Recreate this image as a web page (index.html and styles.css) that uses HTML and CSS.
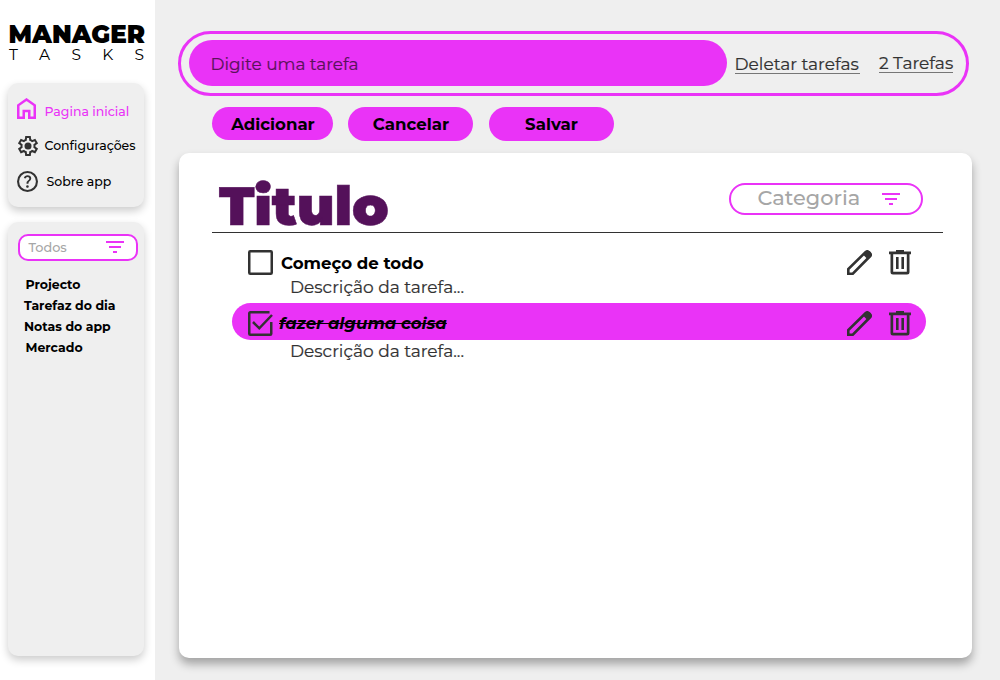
FILE: index.html
```
<!DOCTYPE html>
<html lang="pt-BR">
<head>
<meta charset="utf-8">
<title>Manager Tasks</title>
<link rel="stylesheet" href="styles.css">
</head>
<body>
<svg class="defs" aria-hidden="true">
  <symbol id="filter" viewBox="0 0 18 12"><path d="M0 0h18v2H0zM3 5h12v2H3zM7 10h4v2H7z"/></symbol>
  <symbol id="edit" viewBox="0 0 25 25"><path d="M1.300 23.700V19L18.500 2.200a2.500 2.500 0 0 1 3.500 0l.8.800a2.500 2.500 0 0 1 0 3.500L5.800 23.700z" fill="none" stroke="#323232" stroke-width="2.600"/><path d="m16 4.500 3-3a3 3 0 0 1 3.800 0L24 3a3 3 0 0 1 0 3.500l-3.200 3z"/></symbol>
  <symbol id="trash" viewBox="0 0 22 25"><path d="M0 1.500h7V0h8v1.500h7v2.700h-1.500V22a2.500 2.500 0 0 1-2.500 2.500H4A2.500 2.500 0 0 1 1.500 22V4.200H0zm4.200 2.700v17.600h13.600V4.200zM7 7h2.600v12H7zm5.400 0H15v12h-2.600z" fill-rule="evenodd"/></symbol>
</svg>
<aside class="sidebar">
  <div class="logo">
    <div class="logo-name">MANAGER</div>
    <div class="logo-sub"><span>T</span><span>A</span><span>S</span><span>K</span><span>S</span></div>
  </div>
  <nav class="panel menu">
    <a class="menu-item active"><svg class="home" viewBox="0 0 19 21"><path d="M1.250 19.750V7.300L9.500 1.500l8.250 5.800v12.450h-5.500V13h-5.500v6.750z"/></svg>Pagina inicial</a>
    <a class="menu-item settings"><svg class="gear" viewBox="2 2 20 20"><path d="m9.250 22-.4-3.200q-.325-.125-.612-.3t-.563-.375L4.700 19.375l-2.750-4.750 2.575-1.950Q4.500 12.500 4.500 12.338v-.675q0-.163.025-.338L1.950 9.375l2.750-4.750 2.975 1.250q.275-.2.575-.375t.6-.3l.4-3.200h5.500l.4 3.200q.325.125.613.3t.562.375l2.975-1.250 2.750 4.750-2.575 1.950q.025.175.025.338v.675q0 .162-.05.337l2.575 1.950-2.750 4.750-2.950-1.250q-.275.2-.575.375t-.6.3l-.4 3.200zM11 20h1.975l.35-2.650q.775-.2 1.438-.587t1.212-.938l2.475 1.025.975-1.700-2.150-1.625q.125-.35.175-.737T17.500 12t-.05-.787-.175-.738l2.150-1.625-.975-1.700-2.475 1.050q-.55-.575-1.212-.963t-1.438-.587L13 4h-1.975l-.35 2.650q-.775.2-1.437.588t-1.213.937L5.550 7.150l-.975 1.700 2.150 1.600q-.125.375-.175.750t-.05.8q0 .4.050.775t.175.750l-2.150 1.625.975 1.700 2.475-1.050q.55.575 1.213.963t1.437.587z"/><circle cx="12" cy="12" r="3.500"/></svg>Configurações</a>
    <a class="menu-item"><svg class="help" viewBox="2 2 20 20"><path d="M11.950 18q.525 0 .888-.363t.362-.887-.362-.888-.888-.362-.887.362-.363.888.363.887.887.363m-.9-3.850h1.850q0-.825.188-1.300t1.062-1.300q.65-.65 1.025-1.238T15.550 8.900q0-1.400-1.025-2.150T12.100 6q-1.425 0-2.312.750T8.550 8.550l1.650.65q.125-.45.563-.975T12.100 7.700q.8 0 1.200.438t.4.962q0 .5-.3.938t-.75.812q-1.100.975-1.350 1.475t-.25 1.825M12 22a10 10 0 1 1 0-20 10 10 0 0 1 0 20m0-2a8 8 0 1 0 0-16 8 8 0 0 0 0 16"/></svg>Sobre app</a>
  </nav>
  <section class="panel lists">
    <div class="select"><span>Todos</span><svg class="filter"><use href="#filter"/></svg></div>
    <ul class="categories">
      <li class="inset">Projecto</li>
      <li>Tarefaz do dia</li>
      <li>Notas do app</li>
      <li class="inset">Mercado</li>
    </ul>
  </section>
</aside>
<main class="main">
  <header class="topbar">
    <div class="input">Digite uma tarefa</div>
    <a class="link delete">Deletar tarefas</a>
    <a class="link count">2 Tarefas</a>
  </header>
  <div class="actions">
    <button class="btn add">Adicionar</button>
    <button class="btn cancel">Cancelar</button>
    <button class="btn save">Salvar</button>
  </div>
  <section class="board">
    <div class="board-head">
      <h1 class="title">Titulo</h1>
      <div class="category"><span class="category-label">Categoria</span><svg class="filter"><use href="#filter"/></svg></div>
    </div>
    <article class="entry">
      <div class="task">
        <svg class="check" viewBox="0 0 25 25"><rect x="1.250" y="1.250" width="22.500" height="22.500" rx="1"/></svg>
        <span class="name">Começo de todo</span>
        <svg class="edit"><use href="#edit"/></svg><svg class="trash"><use href="#trash"/></svg>
      </div>
      <p class="desc">Descrição da tarefa...</p>
    </article>
    <article class="entry">
      <div class="task done">
        <svg class="check" viewBox="0 0 25 25"><path d="M21.500 1.250H2.250a1 1 0 0 0-1 1v20.500a1 1 0 0 0 1 1h20a1 1 0 0 0 1-1V11M5 11l6.300 6.300L24 4"/></svg>
        <span class="name"><s>fazer alguma coisa</s></span>
        <svg class="edit"><use href="#edit"/></svg><svg class="trash"><use href="#trash"/></svg>
      </div>
      <p class="desc">Descrição da tarefa...</p>
    </article>
  </section>
</main>
</body>
</html>
```
FILE: styles.css
```
* { box-sizing: border-box; }
body { margin: 0; width: 1000px; height: 680px; overflow: hidden; display: flex; background: #efefef; color: #000; font-family: Montserrat, Inter, sans-serif; white-space: nowrap; }
.defs { position: absolute; width: 0; height: 0; }
svg { flex: none; fill: #323232; }

.sidebar { width: 155px; background: #fff; padding: 22px 11px 24px 8px; display: flex; flex-direction: column; }
.logo { height: 61px; }
.logo-name { height: 24px; padding-left: .6px; font-size: 24.6px; line-height: 24px; font-weight: 900; }
.logo-sub { display: flex; justify-content: space-between; padding-left: 1px; line-height: 17px; font-size: 15.5px; font-weight: 400; }
.panel { background: #efefef; border-radius: 10px; box-shadow: 0 4px 8px rgba(0, 0, 0, .2); }
.menu { height: 124px; padding: 11px 0 0 9px; }
.menu-item { display: flex; align-items: center; height: 35px; font-size: 12.5px; font-weight: 500; }
.settings { height: 33px; margin-bottom: 2px; }
.active { color: #ea33f7; }
.home { width: 19px; height: 21px; margin: 0 8.5px 7px 0; fill: none; stroke: #ea33f7; stroke-width: 2.5; }
.gear { width: 20px; height: 20px; margin: 0 6.5px 0 1px; }
.help { width: 21px; height: 21px; margin-right: 8.5px; }
.lists { flex: 1; margin-top: 15px; padding: 12px 6px 0 10px; }
.select { display: flex; align-items: center; justify-content: space-between; height: 27px; padding: 0 12px 0 8.5px; border: 2px solid #ea33f7; border-radius: 10px; background: #fff; color: #a6a6a6; font-size: 12.8px; font-weight: 500; }
.filter { width: 18px; height: 12px; margin-bottom: 1px; fill: #ea33f7; }
.categories { list-style: none; margin: 13px 0 0; padding: 0 0 0 6px; font-size: 12.5px; line-height: 21px; font-weight: 700; }
.inset { padding-left: 1.5px; }

.main { flex: 1; padding: 31px 28px 22px 23px; display: flex; flex-direction: column; }
.topbar { display: flex; align-items: flex-start; height: 65px; width: 791px; border: 3px solid #ea33f7; border-radius: 33px; padding: 6px 0 0 8px; }
.input { width: 538px; height: 46px; border-radius: 23px; background: #ea33f7; color: #5a125a; padding-left: 21.5px; line-height: 48px; font-size: 16.9px; -webkit-text-stroke: .2px; }
.link { color: #323232; font-size: 17px; -webkit-text-stroke: .2px; line-height: 20px; height: 20px; border-bottom: 1px solid #767676; }
.delete { width: 125px; margin: 14px 0 0 7.5px; }
.count { margin: 13px 0 0 19.5px; }
.actions { display: flex; gap: 15px; padding: 11px 0 0 34px; height: 57px; align-items: flex-start; }
.btn { width: 125px; height: 34px; border: 0; padding: 0 0 0 1px; border-radius: 17px; background: #ea33f7; color: #000; font: 700 16.6px Montserrat, Inter, sans-serif; }
.add { width: 121px; height: 33px; }
.save { margin-left: 1px; padding: 0; }

.board { flex: 1; width: 793px; margin-left: 1px; background: #fff; border-radius: 10px; box-shadow: 0 6px 10px rgba(0, 0, 0, .32); }
.board-head { display: flex; justify-content: space-between; height: 80px; margin: 0 29px 0 33px; border-bottom: 1px solid #323232; padding: 30px 20px 0 7px; }
.title { margin: 0; font-size: 54.2px; line-height: 46px; font-weight: 900; letter-spacing: -.1px; color: #54115a; -webkit-text-stroke: .5px; }
.category { display: flex; width: 194px; height: 32px; border: 2px solid #ea33f7; border-radius: 16px; padding: 0 21px 0 26.5px; align-items: center; justify-content: space-between; color: #a6a6a6; font-size: 20.9px; font-weight: 500; }
.category-label { line-height: 24px; margin-bottom: 3px; }
.entry { height: 61px; padding-top: 9px; }
.entry + .entry { padding-top: 0; margin-top: 9px; }
.task { display: flex; align-items: center; height: 37px; margin: 0 46px 0 53px; padding: 3px 0 0 16px; font-weight: 700; font-size: 16.6px; }
.done { border-radius: 19px; background: #ea33f7; font-style: italic; }
.check { width: 25px; height: 25px; fill: none; stroke: #323232; stroke-width: 2.5; }
.name { flex: 1; padding: 1px 0 0 8px; }
.done .name { padding: 0 0 0 6px; }
.edit { width: 25px; height: 25px; margin-right: 17px; }
.trash { width: 22px; height: 25px; margin-right: 15px; }
.desc { margin: -2px 0 0 111px; height: 20px; line-height: 20px; font-size: 17px; -webkit-text-stroke: .2px; color: #323232; }
.done + .desc { margin-top: 1px; }
```
